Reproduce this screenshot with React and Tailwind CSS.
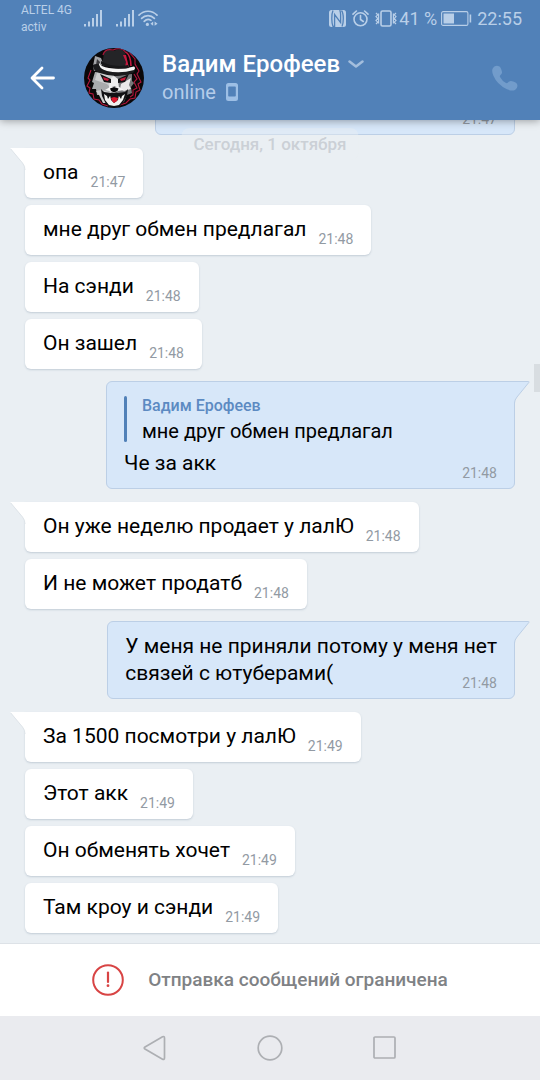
// lines: text rows of the bubble, the time always sits beside the last one
const AUTHOR = "Вадим Ерофеев";

const groups = [
  {
    id: 1,
    out: true,
    messages: [{ id: 11, lines: [""], time: "21:47", width: "w-[360px]" }],
  },
  {
    id: 2,
    out: false,
    messages: [
      { id: 21, lines: ["опа"], time: "21:47" },
      { id: 22, lines: ["мне друг обмен предлагал"], time: "21:48" },
      { id: 23, lines: ["На сэнди"], time: "21:48" },
      { id: 24, lines: ["Он зашел"], time: "21:48" },
    ],
  },
  {
    id: 3,
    out: true,
    messages: [
      {
        id: 31,
        quote: { author: AUTHOR, text: "мне друг обмен предлагал" },
        lines: ["Че за акк"],
        time: "21:48",
        width: "w-[409px]",
      },
    ],
  },
  {
    id: 4,
    out: false,
    messages: [
      { id: 41, lines: ["Он уже неделю продает у лалЮ"], time: "21:48" },
      { id: 42, lines: ["И не может продатб"], time: "21:48" },
    ],
  },
  {
    id: 5,
    out: true,
    messages: [
      {
        id: 51,
        lines: ["У меня не приняли потому у меня нет", "связей с ютуберами("],
        time: "21:48",
      },
    ],
  },
  {
    id: 6,
    out: false,
    messages: [
      { id: 61, lines: ["За 1500 посмотри у лалЮ"], time: "21:49" },
      { id: 62, lines: ["Этот акк"], time: "21:49" },
      { id: 63, lines: ["Он обменять хочет"], time: "21:49" },
      { id: 64, lines: ["Там кроу и сэнди"], time: "21:49" },
    ],
  },
];

// =========================
// STATUS BAR ICONS
// =========================
const SignalIcon = () => (
  <svg className="w-[18px] h-[17px]" viewBox="0 0 18 17" fill="currentColor">
    <rect x="0" y="14" width="2" height="2.5" />
    <rect x="4" y="11.5" width="2" height="5" />
    <rect x="8" y="8" width="2" height="8.5" />
    <rect x="12" y="4" width="2" height="12.5" />
    <rect x="16" y="0" width="2" height="16.5" />
  </svg>
);

const WifiIcon = () => (
  <svg
    className="w-5 h-[17px]"
    viewBox="0 0 20 17"
    fill="none"
    stroke="currentColor"
    strokeWidth="1.7"
    strokeLinecap="round"
  >
    <path d="M1 5.2C6 -.1 14 -.1 19 5.2" />
    <path d="M3.6 8.3C7.2 4.6 12.8 4.6 16.4 8.3" />
    <path d="M6.2 11.3C8.4 9.2 11 9.1 13 10.4" />
    <circle cx="9.4" cy="14.4" r="1.6" fill="currentColor" stroke="none" />
    <path d="M15.2 11.6v4.2L12.4 13.7zM16.6 11.6v4.2L19.6 13.7z" fill="currentColor" stroke="none" />
  </svg>
);

const NfcIcon = () => (
  <svg className="w-[17px] h-[17px]" viewBox="0 0 17 17">
    <rect width="17" height="17" rx="2.5" fill="currentColor" />
    <path
      fill="none"
      stroke="#5181b8"
      strokeWidth="1.3"
      d="M5 16.5H4Q2.8 14 2.8 8.5T4 .5M5.6 17V4.5L11.6 12.600V4.2Q11.5 2 10.8 0M12.5 .5Q14.3 3 14.3 8.5T13 16.5"
    />
  </svg>
);

const AlarmIcon = () => (
  <svg
    className="w-[17px] h-[17px]"
    viewBox="0 0 17 17"
    fill="none"
    stroke="currentColor"
    strokeWidth="1.6"
    strokeLinecap="round"
  >
    <circle cx="8.5" cy="9.3" r="6.5" />
    <path d="M8.5 5.5v4l2.8 2M1 4.2L4.4 1M16 4.2L12.6 1" />
  </svg>
);

const VibrateIcon = () => (
  <svg
    className="w-[22px] h-[17px]"
    viewBox="0 0 22 17"
    fill="none"
    stroke="currentColor"
    strokeWidth="1.6"
  >
    <rect x="6" y="1" width="10" height="15" rx="1.5" />
    <path
      d="M1 3l1.800 1.800L1 6.600l1.800 1.900L1 10.400l1.800 1.800L1 14M3.600 3.500v10M21 3l-1.800 1.800L21 6.600l-1.800 1.900 1.800 1.900-1.800 1.800L21 14M18.400 3.500v10"
      strokeWidth="1.2"
    />
  </svg>
);

const BatteryIcon = () => (
  <svg className="w-[31px] h-[15px]" viewBox="0 0 31 15" fill="none">
    <rect x=".6" y=".6" width="26.3" height="13.8" rx="1.5" stroke="currentColor" strokeWidth="1.1" />
    <rect x="2.5" y="2.5" width="10.5" height="10" fill="currentColor" />
    <rect x="28.600" y="3.5" width="1.6" height="8" fill="currentColor" />
  </svg>
);

const StatusBar = () => (
  <div className="flex h-9 items-center justify-between pt-px pl-[21px] pr-[18px] text-[#b9cfe8]">
    <div className="flex items-center">
      <div className="w-[63px] text-xs leading-[17px]">
        <div>ALTEL 4G</div>
        <div>activ</div>
      </div>
      <SignalIcon />
      <div className="ml-[14px] flex gap-1">
        <SignalIcon />
        <WifiIcon />
      </div>
    </div>
    <div className="flex items-center text-lg leading-5">
      <div className="flex gap-[6px]">
        <NfcIcon />
        <AlarmIcon />
        <VibrateIcon />
      </div>
      <span className="ml-[2px]">41 %</span>
      <span className="ml-1 mr-[5px]">
        <BatteryIcon />
      </span>
      <span>22:55</span>
    </div>
  </div>
);

// =========================
// HEADER
// =========================
const WolfAvatar = () => (
  <svg className="size-[60px] shrink-0" viewBox="0 0 60 60" role="img" aria-label={AUTHOR}>
    <defs>
      <clipPath id="avatar-clip">
        <circle cx="30" cy="30" r="30" />
      </clipPath>
    </defs>
    <g clipPath="url(#avatar-clip)">
      <rect width="60" height="60" fill="#0a0809" />
      {/* red fur outline */}
      <g fill="none" stroke="#b3163c" strokeWidth="1.1">
        <path d="M7 22L4 30l2 2-3 6 3 2-1 5 4 1 1 5 5 1 3 4 6 2" />
        <path d="M45 4l6 7 0 5 4 7-2 3 4 8-3 2 2 6-4 2-1 6-5 1-4 4-6 2" />
        <path d="M50 26l3 5-3 3 3 6-4 2 0 5-3 2" />
      </g>
      {/* ear */}
      <path d="M9 18L11 8l6 2 2 5-4 6-5 2z" fill="#a3a4a7" />
      <path d="M12 17l1-6 3 3-1 4z" fill="#3b3a3d" />
      {/* face, lit side then shaded side */}
      <path d="M11 24L8 34l2 1-2 6 4 0 1 6 3 0 3 7 5 2 6-2V26z" fill="#a9abad" />
      <path d="M13 25l-2 7 6 2 6 2 5 5-3 3-7-2-6 1 3 4 4 8 6 0 5-28z" fill="#cdcecf" />
      <path d="M30 28l18-2 0 7 2 2-3 4 1 6-5 2-3 7-6 3-4-2z" fill="#77787b" />
      <path d="M37 36l10-6-2 7 2 4-7 2-4-2z" fill="#e9e9e9" />
      <path d="M26 31l4-3 4 3 1 9-5-2-5 2z" fill="#ededed" />
      {/* brows and eyes */}
      <path d="M16 26l11 5 0 4-7-1zM45 26l-11 5 0 4 7-1z" fill="#121113" />
      <path d="M19 29l6 2-1 2-4-1zM42 29l-6 2 1 2 4-1z" fill="#c81b3a" />
      {/* mouth */}
      <path d="M17 41l3 3 7 1 3-1 4 1 7-1 3-3-1 7-5 8-4 3h-8l-4-3-4-8z" fill="#111113" />
      <path d="M20 46l3 2 1 3 2-3 9 0 2 3 1-3 3-2-2 6-4 5-5 1-5-1-4-5z" fill="#f2f2f0" />
      <path d="M26 47h9l-1 5-4 3-3-3z" fill="#111113" />
      <path d="M27 50l3-1 4 1-1 3-3 2-2-2z" fill="#dc1a30" />
      {/* nose */}
      <path d="M21 42l5-3 4 0 5 0 5 3-6 1-4 2-4-2z" fill="#f4f4f4" />
      <path d="M26 40.5l4-1.500 4.500 1.500-1 2.500-3.500 1.500-3-1.500z" fill="#08080a" />
      {/* hat */}
      <path d="M42 4Q47 8 47 18" fill="none" stroke="#c51940" strokeWidth="1.6" />
      <path d="M18 18L20 5Q22 0 29 3Q38-1 41 5L45 20Z" fill="#242427" />
      <path d="M19 7Q21 0 29 2Q38-2 42 5" fill="none" stroke="#a8173a" strokeWidth="1.2" />
      <path d="M39 7l3 7-1 5 4 1-3-13z" fill="#c51940" />
      <path d="M9 17Q12 15 17 17Q29 25 50 18Q53 21 49 25Q32 31 16 25Q8 22 9 17Z" fill="#1b1b1d" />
      <path d="M15 15Q17 19 25 20Q38 22 50 18.500Q52 20 50 22Q36 26 23 23Q14 20 15 15Z" fill="#f5f5f5" />
      <path d="M17 13Q28 20 44 17L45 20Q29 22 17 16Z" fill="#18181a" />
    </g>
  </svg>
);

const Header = () => (
  <header className="relative z-20 shrink-0 bg-[#5181b8] shadow-[0_1px_8px_rgba(0,0,0,0.35)]">
    <StatusBar />
    <div className="flex h-[84px] items-center pl-[30px] pr-[22px]">
      <button type="button" aria-label="Назад" className="mr-7 shrink-0 text-white">
        <svg
          className="w-[26px] h-6"
          viewBox="0 0 26 24"
          fill="none"
          stroke="currentColor"
          strokeWidth="2.8"
          strokeLinecap="round"
          strokeLinejoin="round"
        >
          <path d="M12 2L2 12l10 10M2.500 12H23.500" />
        </svg>
      </button>
      <WolfAvatar />
      <div className="ml-[18px] min-w-0 flex-1">
        <button type="button" className="flex items-center gap-2 text-2xl leading-7 font-medium text-white">
          {AUTHOR}
          <svg
            className="w-4 h-2"
            viewBox="0 0 16 8"
            fill="none"
            stroke="#a3bedd"
            strokeWidth="2.5"
            strokeLinecap="round"
            strokeLinejoin="round"
          >
            <path d="M1.500 1.500l6.500 5 6.500-5" />
          </svg>
        </button>
        <div className="flex items-center gap-[10px] text-xl leading-7 text-[#b5cdea]">
          online
          <svg className="w-3 h-[18px]" viewBox="0 0 12 18">
            <path
              fill="#9dbfe5"
              fillRule="evenodd"
              d="M2.500 0h7A2.500 2.500 0 0 1 12 2.500v13A2.500 2.500 0 0 1 9.500 18h-7A2.500 2.500 0 0 1 0 15.500v-13A2.500 2.500 0 0 1 2.500 0ZM3 3.500a.8.8 0 0 0-.8.8v8.400a.8.8 0 0 0 .8.800h6a.8.8 0 0 0 .8-.800V4.300A.8.8 0 0 0 9 3.500Z"
            />
          </svg>
        </div>
      </div>
      <button type="button" aria-label="Позвонить" className="shrink-0">
        <svg className="size-[26px]" viewBox="0 0 26 26" fill="#729ccb">
          <path d="M1 3Q3.500-.5 7.500 1.500Q9 2.500 10 7Q10.300 8.500 8.500 10Q7.500 11 8 12Q10.500 16.500 14 18Q15 18.500 16 17.500Q17.500 15.700 19 16Q24 17 25 19Q26.500 22.500 23 25Q20 26.500 15 24.300Q5 19.500 1.300 10.500Q-.8 5.500 1 3Z" />
        </svg>
      </button>
    </div>
  </header>
);

// =========================
// MESSAGES
// =========================
const Tail = ({ out }) =>
  out ? (
    <svg className="absolute -top-px -right-4 w-4 h-[22px]" viewBox="0 0 16 22">
      <path d="M0 .5H14.500Q15.500 .5 14.800 1.500L3 16Q.5 19 .5 22H0Z" fill="#d7e7f9" />
      <path d="M0 .5H14.500Q15.500 .5 14.800 1.500L3 16Q.5 19 .5 22" fill="none" stroke="#bccfe6" />
    </svg>
  ) : (
    <svg className="absolute top-0 -left-[15px] w-4 h-[22px]" viewBox="0 0 16 22">
      <path d="M16 0H1Q0 0 .8 1L12.500 15Q15 18 15 22H16Z" fill="#ffffff" />
      <path d="M.8 1L12.500 15Q15 18 15 22" fill="none" stroke="#dde3e8" />
    </svg>
  );

const Quote = ({ author, text }) => (
  <blockquote className="mt-[3px] mb-2 flex h-[46px] gap-[15px]">
    <span className="w-[3px] rounded-full bg-[#5181b8]" />
    <div>
      <div className="text-base leading-5 font-medium text-[#5c8ac2]">{author}</div>
      <div className="text-xl leading-[30px]">{text}</div>
    </div>
  </blockquote>
);

const Bubble = ({ message, out, first }) => {
  const { lines, time, quote, width = "" } = message;
  const last = lines[lines.length - 1];

  return (
    <li
      className={`relative rounded-md pt-[11px] text-[21px] leading-[27px] text-black ${width} ${
        out
          ? "border border-[#bccfe6] bg-[#d7e7f9] px-[17px] pb-[7px]"
          : "bg-white px-[18px] pb-2 shadow-[0_1px_2px_rgba(120,140,160,0.35)]"
      } ${first ? (out ? "rounded-tr-none" : "rounded-tl-none") : ""}`}
    >
      {first && <Tail out={out} />}
      {quote && <Quote {...quote} />}
      {lines.slice(0, -1).map((line) => (
        <p key={line}>{line}</p>
      ))}
      <div className="flex items-end justify-between gap-3">
        <p className="mb-1">{last}</p>
        <time className="text-sm leading-4 text-[#929aa3]">{time}</time>
      </div>
    </li>
  );
};

const Chat = () => (
  <main className="relative flex min-h-0 flex-1 flex-col justify-end gap-3 overflow-hidden bg-[#eaeff3] pb-[10px]">
    {groups.map((group) => (
      <ul
        key={group.id}
        className={`flex shrink-0 flex-col gap-[7px] px-[25px] ${group.out ? "items-end pb-px" : "items-start"}`}
      >
        {group.messages.map((message, index) => (
          <Bubble key={message.id} message={message} out={group.out} first={index === 0} />
        ))}
      </ul>
    ))}

    {/* floating date while scrolling */}
    <div className="absolute top-2 left-1/2 z-10 -translate-x-1/2 rounded-lg bg-[#eaeff3]/40 px-3 text-[17px] leading-8 font-medium whitespace-nowrap text-[#cbd0d6]">
      Сегодня, 1 октября
    </div>
    {/* scroll thumb */}
    <div className="absolute top-[244px] right-0 h-7 w-[6px] bg-[#d8dde1]" />
  </main>
);

// =========================
// BOTTOM
// =========================
const Restricted = () => (
  <footer className="flex h-[73px] shrink-0 items-center justify-center gap-6 border-t border-[#dde2e7] bg-white">
    <svg className="size-8" viewBox="0 0 32 32" fill="none" stroke="#d84444" strokeWidth="2">
      <circle cx="16" cy="16" r="14.8" />
      <path d="M16 8.500v9.500" strokeWidth="2.2" strokeLinecap="round" />
      <circle cx="16" cy="21.7" r="1.4" fill="#d84444" stroke="none" />
    </svg>
    <p className="text-[19px] leading-7 font-medium text-[#7f8285]">Отправка сообщений ограничена</p>
  </footer>
);

const navItems = [
  {
    id: "back",
    label: "Назад",
    shape: <path d="M3 12L20.500 1.700Q22.500 1 22.500 3V23Q22.500 25 20.500 24.200L3 14Q1.500 13 3 12Z" />,
  },
  { id: "home", label: "Домой", shape: <circle cx="13" cy="13" r="11.8" /> },
  { id: "recent", label: "Недавние", shape: <rect x="2" y="2" width="21" height="21" rx="1" /> },
];

const NavBar = () => (
  <nav className="flex h-16 shrink-0 items-center justify-center gap-[89px] bg-[#eaebef]">
    {navItems.map((item) => (
      <button key={item.id} type="button" aria-label={item.label}>
        <svg className="size-[26px]" viewBox="0 0 26 26" fill="none" stroke="#adafb3" strokeWidth="1.7">
          {item.shape}
        </svg>
      </button>
    ))}
  </nav>
);

const App = () => {
  return (
    <div className="flex h-screen w-full flex-col overflow-hidden font-[Roboto,sans-serif]">
      <Header />
      <Chat />
      <Restricted />
      <NavBar />
    </div>
  );
};

export default App;
